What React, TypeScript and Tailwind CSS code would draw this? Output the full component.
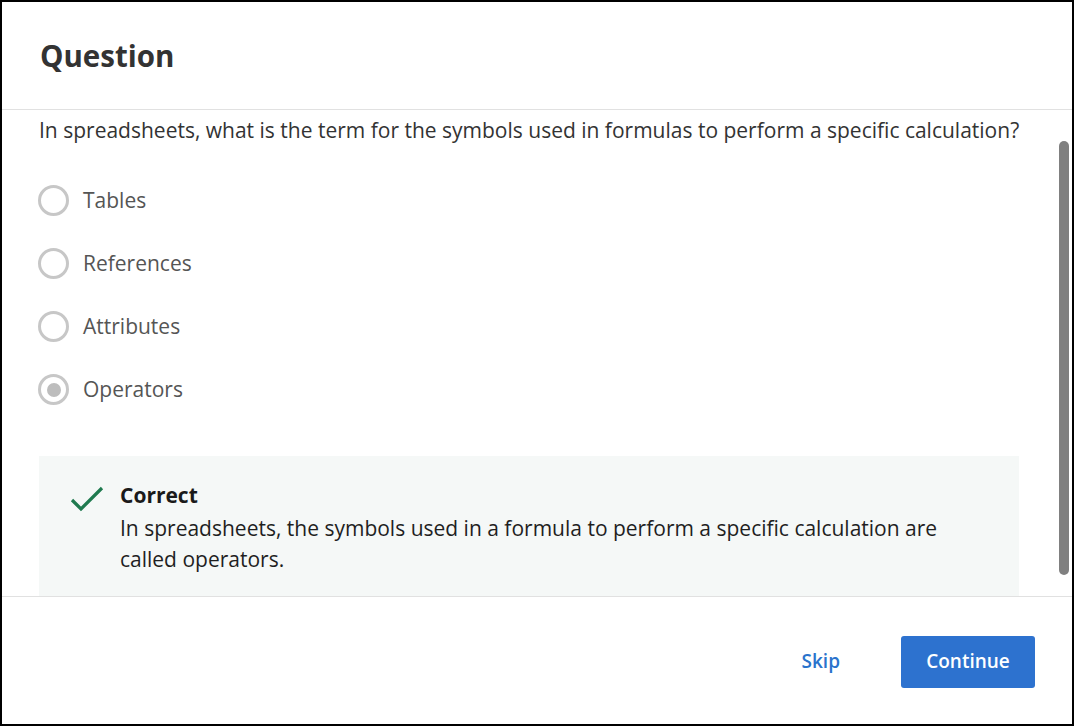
import React from 'react';

const options = ['Tables', 'References', 'Attributes', 'Operators'];

const Radio = ({ checked }: { checked: boolean }) => (
  <span className="flex h-[31px] w-[31px] shrink-0 items-center justify-center rounded-full border-[3px] border-[#c7c7c7] bg-white">
    {checked && <span className="h-[14px] w-[14px] rounded-full bg-[#bdbdbd]" />}
  </span>
);

const App = () => {
  return (
    <div
      className="flex h-[726px] w-[1074px] flex-col border-2 border-black bg-white text-[#333]"
      style={{ fontFamily: '"Open Sans", "Noto Sans", sans-serif' }}
    >
      {/* Header */}
      <div className="flex h-[108px] shrink-0 items-center border-b border-[#e1e1e1] px-[38px] pt-[2px]">
        <h1 className="text-[29.5px] font-bold text-[#333]">Question</h1>
      </div>

      {/* Body */}
      <div className="relative flex-1 overflow-hidden">
        <div className="px-[37px] pt-[5px]">
          <p className="text-[21px] leading-[30px] text-[#333]">
            In spreadsheets, what is the term for the symbols used in formulas to perform a specific calculation?
          </p>

          <div className="mt-[40px] -ml-[1px] flex flex-col gap-[32px]">
            {options.map((opt, i) => (
              <label key={i} className="flex h-[31px] items-center gap-[14px]">
                <Radio checked={opt === 'Operators'} />
                <span className="text-[21px] text-[#555]">{opt}</span>
              </label>
            ))}
          </div>

          <div className="mt-[51px] mr-[16px] flex gap-[16px] bg-[#f5f8f7] pt-[27px] pb-[40px] pl-[31px] pr-[60px]">
            <svg width="34" height="28" viewBox="0 0 34 28" className="mt-[2px] shrink-0">
              <path d="M2 15 L11 24 L32 3" fill="none" stroke="#1f7a4f" strokeWidth="3.2" />
            </svg>
            <div>
              <div className="text-[21px] font-bold leading-[24px] text-[#1a1a1a]">Correct</div>
              <p className="mt-[6px] text-[21px] leading-[31px] text-[#1f1f1f]">
                In spreadsheets, the symbols used in a formula to perform a specific calculation are called operators.
              </p>
            </div>
          </div>
        </div>

        {/* scrollbar thumb */}
        <div className="absolute right-[3px] top-[31px] h-[434px] w-[10px] rounded-full bg-[#808080]" />
      </div>

      {/* Footer */}
      <div className="flex h-[128px] shrink-0 items-center justify-end gap-[61px] border-t border-[#e1e1e1] pr-[37px] pt-[2px]">
        <button className="text-[19px] font-semibold text-[#2a73cc]">Skip</button>
        <button className="h-[52px] w-[134px] rounded-[3px] bg-[#2d72cf] text-[19px] font-semibold text-white">
          Continue
        </button>
      </div>
    </div>
  );
};

export default App;
